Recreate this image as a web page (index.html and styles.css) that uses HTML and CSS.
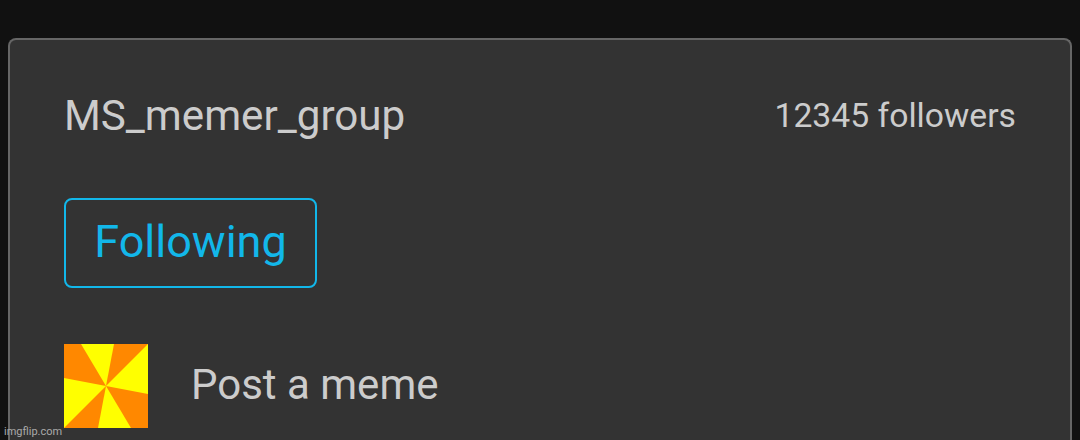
FILE: index.html
```
<!doctype html>
<html lang="en">
  <head>
    <meta charset="UTF-8" />
    <meta name="viewport" content="width=device-width, initial-scale=1.0" />
    <title>MS_memer_group</title>
    <link rel="stylesheet" href="styles.css">
  </head>
  <body>
    <main class="stream-card">
      <div class="stream-header">
        <div class="stream-name">MS_memer_group</div>
        <div class="followers">12345 followers</div>
      </div>

      <button class="follow-btn">Following</button>

      <div class="post-row">
        <svg class="avatar" viewBox="0 0 84 84">
          <rect width="84" height="84" fill="#ff8800" />
          <g fill="#ffff00">
            <path d="M17 0H50L42 42Z" />
            <path d="M84 0V50L42 42Z" />
            <path d="M67 84H34L42 42Z" />
            <path d="M0 84V34L42 42Z" />
          </g>
        </svg>
        <span class="post-label">Post a meme</span>
      </div>
    </main>

    <div class="watermark">imgflip.com</div>
  </body>
</html>
```
FILE: styles.css
```
* {
  box-sizing: border-box;
}

body {
  margin: 0;
  padding: 38px 8px 0;
  height: 440px;
  overflow: hidden;
  background: #111;
  color: #ccc;
  font-family: Roboto, "Liberation Sans", sans-serif;
}

.stream-card {
  height: 402px;
  padding: 52px 54px 0;
  background: #333;
  border: 2px solid #666;
  border-bottom: none;
  border-radius: 8px 8px 0 0;
}

.stream-header {
  display: flex;
  justify-content: space-between;
  align-items: center;
  height: 48px;
  margin-bottom: 58px;
}

.stream-name {
  font-size: 42.15px;
  line-height: 48px;
}

.followers {
  font-size: 33.7px;
  line-height: 46px;
}

.follow-btn {
  display: block;
  width: 253px;
  height: 90px;
  padding: 0 0 2px;
  background: none;
  border: 2px solid #12b7ea;
  border-radius: 8px;
  color: #12b7ea;
  font-family: inherit;
  font-size: 45px;
  line-height: 52px;
}

.post-row {
  display: flex;
  align-items: center;
  gap: 43px;
  margin-top: 56px;
}

.avatar {
  width: 84px;
  height: 84px;
}

.post-label {
  padding-bottom: 2px;
  font-size: 42px;
  line-height: 48px;
}

.watermark {
  position: absolute;
  left: 4px;
  bottom: 2px;
  color: #aaa;
  font-size: 11px;
  line-height: 13px;
}
```
